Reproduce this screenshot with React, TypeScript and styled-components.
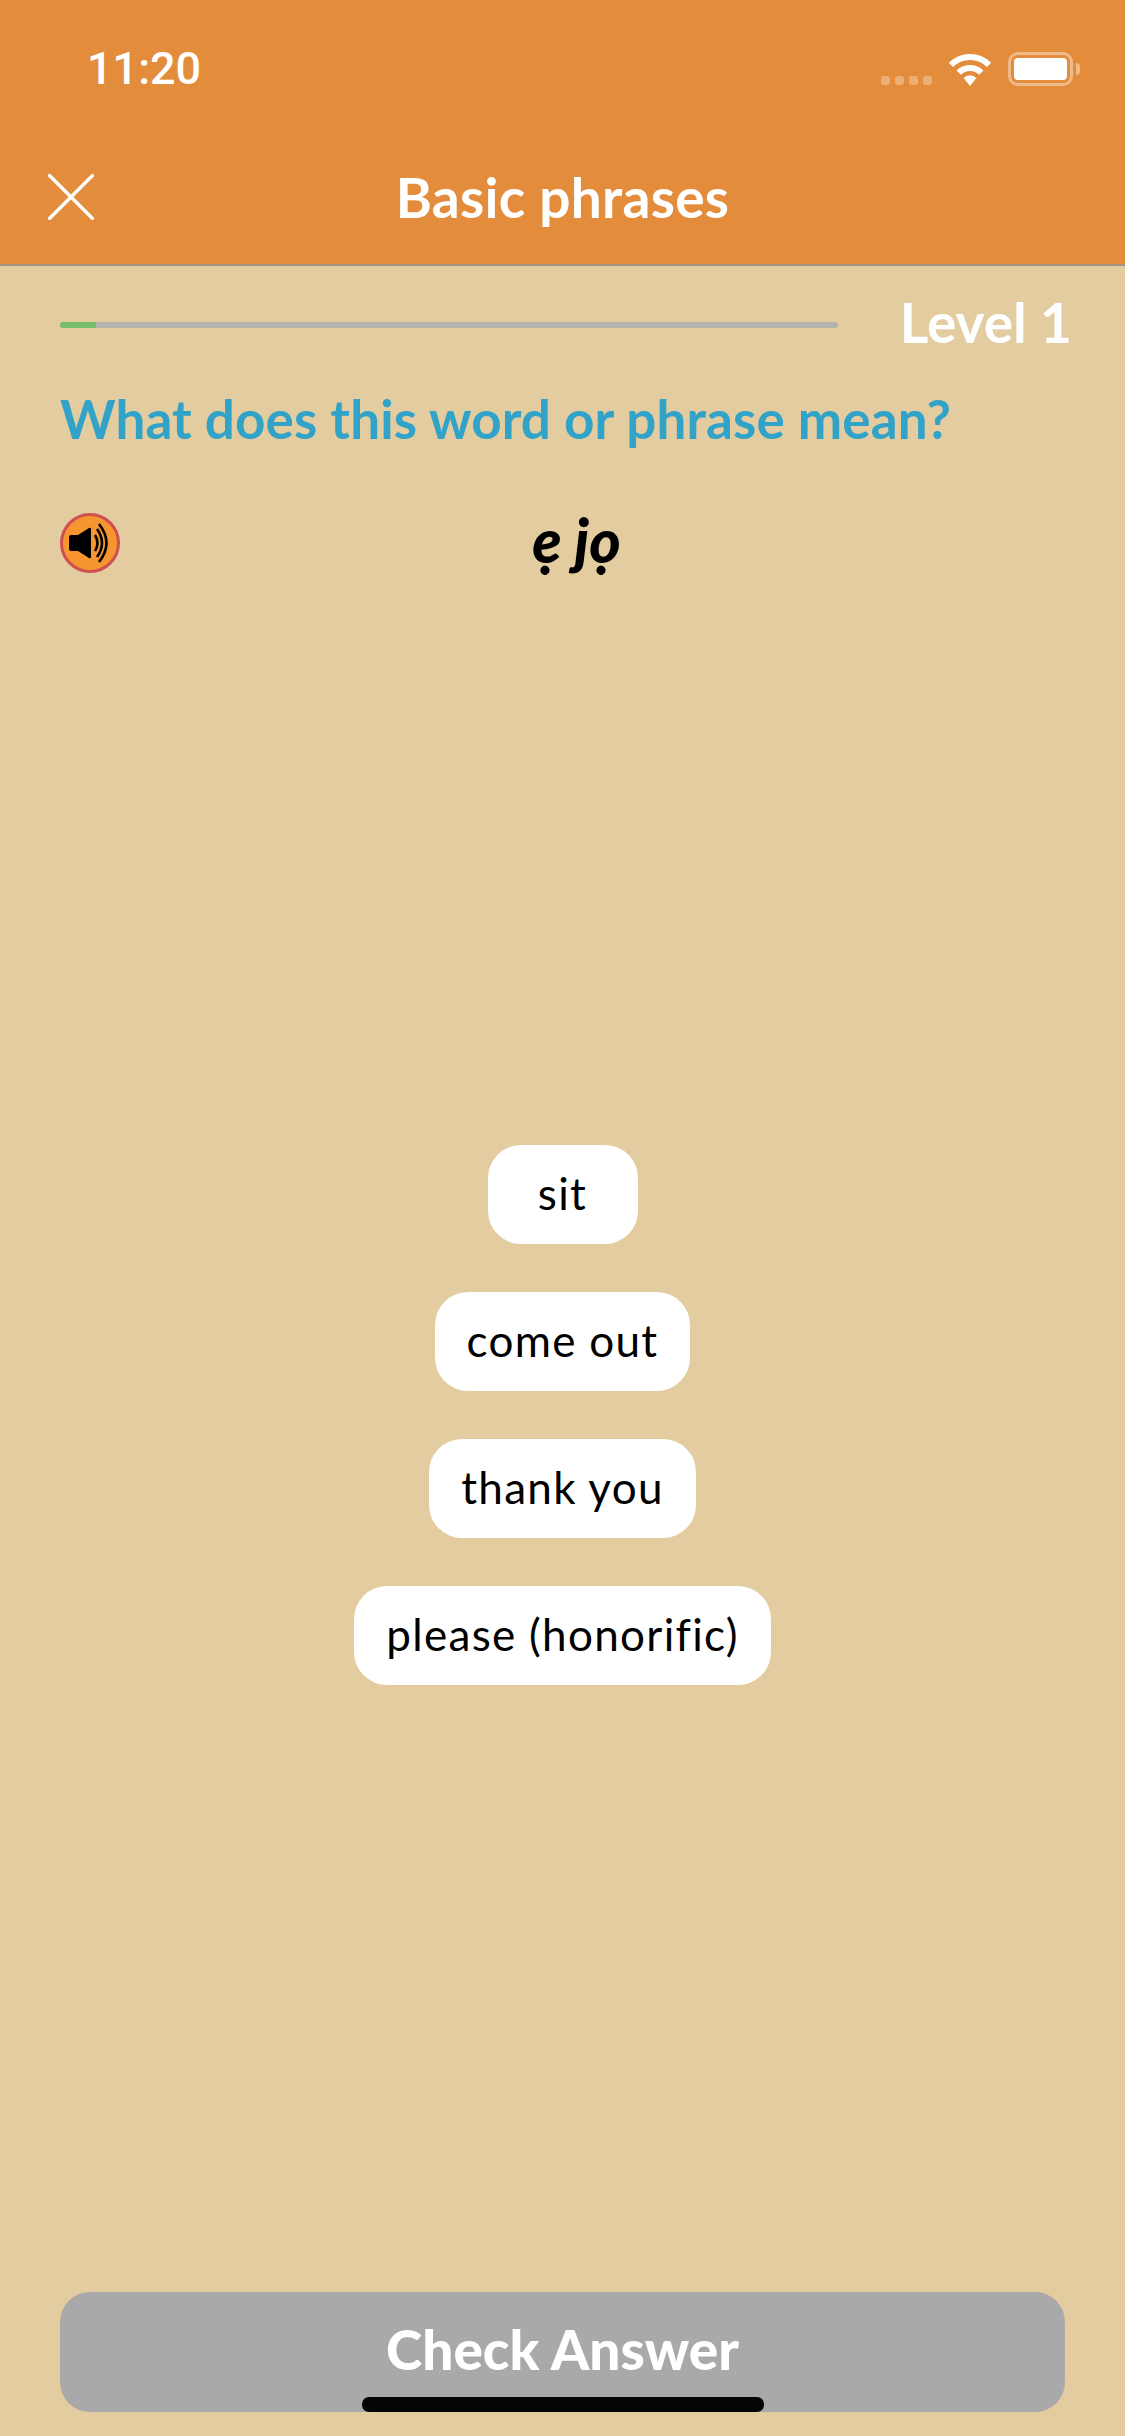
import styled, { createGlobalStyle } from 'styled-components';

const ANSWERS = ['sit', 'come out', 'thank you', 'please (honorific)'];

const GlobalStyle = createGlobalStyle`
  html, body {
    margin: 0;
    padding: 0;
    background: #e3cca0;
  }
`;

const Page = styled.div`
  position: relative;
  display: flex;
  flex-direction: column;
  width: 1125px;
  height: 2436px;
  overflow: hidden;
  background: #e3cca0;
  font-family: Lato, 'Liberation Sans', sans-serif;
`;

const Header = styled.header`
  display: flex;
  flex-direction: column;
  height: 264px;
  background: #e38d3c;
  border-bottom: 2px solid #a3957f;
  color: #fff;
`;

const StatusBar = styled.div`
  display: flex;
  align-items: flex-start;
  justify-content: space-between;
  height: 152px;
  padding: 52px 52px 0 87px;
  box-sizing: border-box;
`;

const Time = styled.div`
  font-family: Roboto, sans-serif;
  font-size: 45px;
  font-weight: 500;
  line-height: 34px;
`;

const StatusIcons = styled.div`
  display: flex;
  align-items: flex-end;
`;

const SignalDots = styled.div`
  display: flex;
  gap: 5px;
  margin-right: 15px;
  margin-bottom: 1px;
`;

const SignalDot = styled.span`
  width: 9px;
  height: 9px;
  border-radius: 3px;
  background: rgba(255, 255, 255, 0.3);
`;

const Battery = styled.div`
  position: relative;
  display: flex;
  width: 65px;
  height: 34px;
  margin-left: 15px;
  padding: 3px;
  box-sizing: border-box;
  border: 3px solid rgba(255, 255, 255, 0.4);
  border-radius: 10px;

  &::after {
    content: '';
    position: absolute;
    top: 8px;
    right: -10px;
    width: 4px;
    height: 12px;
    border-radius: 0 6px 6px 0;
    background: rgba(255, 255, 255, 0.4);
  }
`;

const BatteryLevel = styled.div`
  flex: 1;
  border-radius: 4px;
  background: #fff;
`;

const NavBar = styled.div`
  display: grid;
  grid-template-columns: 1fr auto 1fr;
  align-items: center;
  height: 90px;
  padding: 0 48px;
`;

const Title = styled.h1`
  margin: 0;
  font-size: 55px;
  font-weight: 700;
  letter-spacing: 0.3px;
  line-height: 60px;
`;

const Content = styled.main`
  display: flex;
  flex: 1;
  flex-direction: column;
  padding: 0 60px 24px;
`;

const ProgressRow = styled.div`
  display: flex;
  align-items: center;
  justify-content: space-between;
  height: 60px;
  margin-top: 28px;
`;

const Track = styled.div`
  display: flex;
  width: 778px;
  height: 6px;
  margin-top: 2px;
  border-radius: 3px;
  overflow: hidden;
  background: #b5b3ae;
`;

const TrackFill = styled.div`
  background: #77bf6c;
`;

const Level = styled.div`
  margin-top: -5px;
  margin-right: -7px;
  color: #fff;
  font-size: 55px;
  font-weight: 700;
  line-height: 60px;
`;

const Question = styled.h2`
  margin: 32px 0 0;
  color: #31a2c8;
  font-size: 53px;
  font-weight: 700;
  letter-spacing: 0.1px;
  line-height: 66px;
`;

const PromptRow = styled.div`
  display: grid;
  grid-template-columns: 60px 1fr 60px;
  align-items: center;
  height: 60px;
  margin-top: 61px;
`;

const Prompt = styled.div`
  margin-top: -6px;
  padding-left: 28px;
  color: #000;
  font-size: 60px;
  font-style: italic;
  font-weight: 900;
  line-height: 60px;
  text-align: center;
`;

const Answers = styled.div`
  display: flex;
  flex: 1;
  flex-direction: column;
  align-items: center;
  gap: 48px;
  padding-top: 572px;
`;

const AnswerChip = styled.button`
  min-width: 150px;
  height: 99px;
  padding: 0 32px 3px;
  box-sizing: border-box;
  border: 0;
  border-radius: 33px;
  background: #fff;
  color: #000;
  font-family: Lato, 'Liberation Sans', sans-serif;
  font-size: 44px;
  font-weight: 400;
  letter-spacing: 1.3px;
`;

const CheckButton = styled.button`
  height: 120px;
  padding: 0 0 6px;
  border: 0;
  border-radius: 30px;
  background: #a9a9a9;
  color: #fff;
  font-family: Lato, 'Liberation Sans', sans-serif;
  font-size: 55px;
  font-weight: 900;
`;

const HomeIndicator = styled.div`
  position: absolute;
  left: 362px;
  top: 2397px;
  width: 402px;
  height: 15px;
  border-radius: 7px;
  background: #050505;
`;

const WifiIcon = () => (
  <svg width="46" height="33" viewBox="0 0 46 33" fill="none">
    <path d="M3.9 11.9 A27 27 0 0 1 42.1 11.9" stroke="#fff" strokeWidth="6" />
    <path d="M11.7 19.7 A16 16 0 0 1 34.3 19.7" stroke="#fff" strokeWidth="6" />
    <path d="M16.6 25 A9 9 0 0 1 29.4 25 L23 33 Z" fill="#fff" />
  </svg>
);

const CloseIcon = () => (
  <svg width="46" height="46" viewBox="0 0 46 46" fill="none" stroke="#fff" strokeWidth="3.4" strokeLinecap="round">
    <path d="M1.5 1.5 L44.5 44.5" />
    <path d="M44.5 1.5 L1.5 44.5" />
  </svg>
);

const SpeakerIcon = () => (
  <svg width="60" height="60" viewBox="0 0 60 60">
    <circle cx="30" cy="30" r="28.5" fill="#f79530" stroke="#cf5050" strokeWidth="3" />
    <path d="M9 24 Q9 22 11 22 L18 22 L29 15 Q31 14 31 16 L31 44 Q31 46 29 45 L18 38 L11 38 Q9 38 9 36 Z" fill="#000" />
    <g fill="none" stroke="#000" strokeWidth="2.6">
      <path d="M35 22 Q40 30 35 38" />
      <path d="M37 16 Q47 30 37 44" />
      <path d="M39 11 Q54 30 39 49" />
    </g>
  </svg>
);

export default function App() {
  return (
    <Page>
      <GlobalStyle />
      <Header>
        <StatusBar>
          <Time>11:20</Time>
          <StatusIcons>
            <SignalDots>
              <SignalDot />
              <SignalDot />
              <SignalDot />
              <SignalDot />
            </SignalDots>
            <WifiIcon />
            <Battery>
              <BatteryLevel />
            </Battery>
          </StatusIcons>
        </StatusBar>
        <NavBar>
          <CloseIcon />
          <Title>Basic phrases</Title>
        </NavBar>
      </Header>
      <Content>
        <ProgressRow>
          <Track>
            <TrackFill style={{ width: `${(36 / 778) * 100}%` }} />
          </Track>
          <Level>Level 1</Level>
        </ProgressRow>
        <Question>What does this word or phrase mean?</Question>
        <PromptRow>
          <SpeakerIcon />
          <Prompt>ẹ jọ</Prompt>
        </PromptRow>
        <Answers>
          {ANSWERS.map((answer) => (
            <AnswerChip key={answer}>{answer}</AnswerChip>
          ))}
        </Answers>
        <CheckButton>Check Answer</CheckButton>
      </Content>
      <HomeIndicator />
    </Page>
  );
}
